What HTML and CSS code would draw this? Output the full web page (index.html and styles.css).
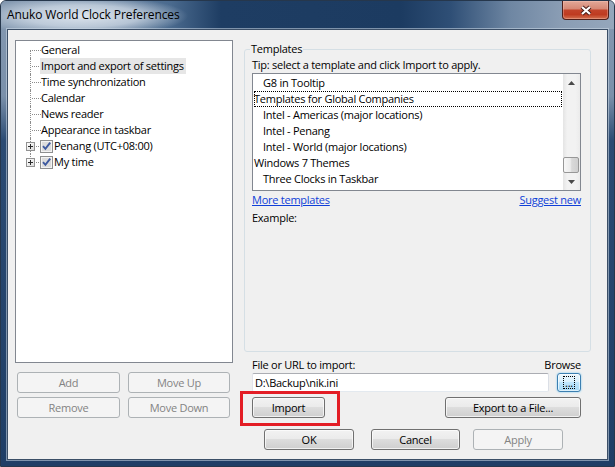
FILE: index.html
```html
<!DOCTYPE html>
<html>
<head>
<meta charset="utf-8">
<link rel="stylesheet" href="styles.css">
</head>
<body>
<div class="window">
  <div class="titlebar">
    <span class="title">Anuko World Clock Preferences</span>
    <div class="close">
      <svg width="14" height="11" viewBox="0 0 14 11"><path d="M3 2 L11 9 M11 2 L3 9" stroke="#4a1d18" stroke-width="4.2" fill="none"/><path d="M3 2 L11 9 M11 2 L3 9" stroke="#ffffff" stroke-width="2.2" fill="none"/></svg>
    </div>
  </div>
  <div class="client">
    <div class="left">
      <div class="tree">
        <div class="row"><span class="conn first"></span><span class="label">General</span></div>
        <div class="row"><span class="conn"></span><span class="label sel">Import and export of settings</span></div>
        <div class="row"><span class="conn"></span><span class="label">Time synchronization</span></div>
        <div class="row"><span class="conn"></span><span class="label">Calendar</span></div>
        <div class="row"><span class="conn"></span><span class="label">News reader</span></div>
        <div class="row"><span class="conn"></span><span class="label">Appearance in taskbar</span></div>
        <div class="row"><span class="conn"><span class="plus"></span></span><span class="check"><svg width="13" height="13" viewBox="0 0 13 13"><rect x="0.5" y="0.5" width="12" height="12" fill="#f3f3f3" stroke="#8e8f8f"/><rect x="2" y="2" width="9" height="9" fill="#dcdcdc"/><path d="M3 6.2 L5.4 8.8 L10.2 2.6" stroke="#3e5aa0" stroke-width="1.9" fill="none"/></svg></span><span class="label">Penang (UTC+08:00)</span></div>
        <div class="row"><span class="conn last"><span class="plus"></span></span><span class="check"><svg width="13" height="13" viewBox="0 0 13 13"><rect x="0.5" y="0.5" width="12" height="12" fill="#f3f3f3" stroke="#8e8f8f"/><rect x="2" y="2" width="9" height="9" fill="#dcdcdc"/><path d="M3 6.2 L5.4 8.8 L10.2 2.6" stroke="#3e5aa0" stroke-width="1.9" fill="none"/></svg></span><span class="label">My time</span></div>
      </div>
      <div class="btn-grid">
        <button class="btn" disabled>Add</button>
        <button class="btn" disabled>Move Up</button>
        <button class="btn" disabled>Remove</button>
        <button class="btn" disabled>Move Down</button>
      </div>
    </div>
    <div class="right">
      <fieldset class="group">
        <legend>Templates</legend>
        <div class="tip">Tip: select a template and click Import to apply.</div>
        <div class="listbox">
          <div class="items">
            <div class="item sub">G8 in Tooltip</div>
            <div class="item focus">Templates for Global Companies</div>
            <div class="item sub">Intel - Americas (major locations)</div>
            <div class="item sub">Intel - Penang</div>
            <div class="item sub">Intel - World (major locations)</div>
            <div class="item">Windows 7 Themes</div>
            <div class="item sub">Three Clocks in Taskbar</div>
          </div>
          <div class="vscroll">
            <div class="sb-btn"><svg width="7" height="4" viewBox="0 0 7 4"><path d="M3.5 0 L7 4 H0 Z" fill="#4a4a4a"/></svg></div>
            <div class="sb-track"><div class="thumb"></div></div>
            <div class="sb-btn"><svg width="7" height="4" viewBox="0 0 7 4"><path d="M0 0 H7 L3.5 4 Z" fill="#4a4a4a"/></svg></div>
          </div>
        </div>
        <div class="links"><a href="#">More templates</a><a href="#">Suggest new</a></div>
        <div class="example">Example:</div>
      </fieldset>
      <div class="import-area">
        <div class="file-labels"><span>File or URL to import:</span><span>Browse</span></div>
        <div class="file-row">
          <div class="input">D:\Backup\nik.ini</div>
          <button class="btn dots"><span class="focus-text">...</span></button>
        </div>
        <div class="action-row">
          <span class="highlight"><button class="btn import">Import</button></span>
          <button class="btn export">Export to a File...</button>
        </div>
      </div>
      <div class="dialog-row">
        <button class="btn ok">OK</button>
        <button class="btn cancel">Cancel</button>
        <button class="btn apply" disabled>Apply</button>
      </div>
    </div>
  </div>
</div>
</body>
</html>
```
FILE: styles.css
```css
* { box-sizing: border-box; }
html, body { margin: 0; padding: 0; background: #ffffff; }
body {
  font-family: "Open Sans", "Noto Sans", sans-serif;
  font-size: 11px;
  line-height: 16px;
  letter-spacing: -0.25px;
  color: #000;
}
.window {
  width: 615px;
  height: 467px;
  display: flex;
  flex-direction: column;
  border: 1px solid #26374c;
  border-radius: 6px 6px 0 0;
  overflow: hidden;
  background: linear-gradient(180deg, #8599b1 0, #7a90aa 95px, #2b4b73 140px, #1f3e66 100%);
}
.titlebar {
  height: 28px;
  flex: none;
  display: flex;
  justify-content: space-between;
  align-items: flex-start;
  background:
    radial-gradient(ellipse 105px 20px at 82px 15px, rgba(226,233,241,0.95) 0%, rgba(212,222,233,0.75) 55%, rgba(200,212,226,0) 100%),
    linear-gradient(90deg, #8398b0 0px, #8398b0 20px, #4a6a8e 170px, #1e3d63 220px, #1c3b61 400px, #2f4f76 450px, #6f87a3 510px, #8a9db4 560px, #95a7bc 615px);
}
.title {
  align-self: center;
  margin-left: 6px;
  font-size: 12px;
  letter-spacing: -0.1px;
  color: #000;
}
.close {
  width: 47px;
  height: 19px;
  margin-right: 5px;
  display: flex;
  align-items: center;
  justify-content: center;
  border: 1px solid #4f1f1a;
  border-top: none;
  border-radius: 0 0 4px 4px;
  background: linear-gradient(180deg, #e2a898 0%, #d68976 42%, #c2432a 52%, #bf3b21 75%, #d2704f 100%);
  box-shadow: inset 0 0 0 1px rgba(255, 205, 195, 0.35);
}
.client {
  flex: 1;
  margin: 0 6px 6px 6px;
  border: 1px solid #3b4e66;
  background: #f0f0f0;
  display: flex;
  gap: 11px;
  padding: 10px 16px 0 7px;
  box-shadow: 0 0 0 1px rgba(205, 218, 232, 0.55);
}
.left {
  width: 218px;
  flex: none;
  display: flex;
  flex-direction: column;
}
.tree {
  height: 323px;
  border: 1px solid #828790;
  background: #fff;
  padding: 1px 0 0 14px;
}
.row {
  height: 16px;
  display: flex;
  align-items: center;
}
.conn {
  flex: none;
  width: 11px;
  height: 16px;
  align-self: flex-start;
  border-left: 1px dotted #8c8c8c;
  background-image: repeating-linear-gradient(90deg, #8c8c8c 0 1px, transparent 1px 2px);
  background-repeat: no-repeat;
  background-size: 10px 1px;
  background-position: 1px 8px;
  display: flex;
  align-items: flex-start;
}
.conn.first {
  height: 8px;
  align-self: flex-end;
  background-position: 1px 0;
}
.conn.last {
  height: 9px;
  background-position: 1px 8px;
}
.plus {
  flex: none;
  width: 9px;
  height: 9px;
  margin-left: -5px;
  margin-top: 4px;
  border: 1px solid #929292;
  background:
    linear-gradient(#2a2a2a, #2a2a2a) center / 5px 1px no-repeat,
    linear-gradient(#2a2a2a, #2a2a2a) center / 1px 5px no-repeat,
    linear-gradient(135deg, #ffffff, #dcdcdc);
}
.check {
  flex: none;
  width: 13px;
  height: 13px;
  margin-left: -1px;
  display: flex;
}
.label {
  white-space: nowrap;
  padding-right: 2px;
  height: 16px;
}
.check + .label { padding-left: 1px; }
.label.sel {
  background: #e6e6e6;
  margin-left: -1px;
  padding-left: 1px;
}
.btn-grid {
  margin-top: 9px;
  padding-left: 2px;
  display: grid;
  grid-template-columns: 103px 102px;
  column-gap: 8px;
  row-gap: 4px;
}
.btn {
  font: inherit;
  letter-spacing: inherit;
  height: 21px;
  padding: 0;
  color: #000;
  border: 1px solid #707070;
  border-radius: 3px;
  background: linear-gradient(180deg, #f2f2f2 0%, #ebebeb 45%, #dddddd 50%, #cfcfcf 100%);
  box-shadow: inset 0 0 0 1px rgba(252, 252, 252, 0.75);
}
.btn:disabled {
  color: #838383;
  border-color: #adb2b5;
  background: #f4f4f4;
  box-shadow: none;
}
.right {
  width: 347px;
  flex: none;
  display: flex;
  flex-direction: column;
}
.group {
  margin: 1px 0 0 0;
  padding: 0 9px 0 7px;
  height: 311px;
  min-width: 0;
  border: 1px solid #d5dfe5;
  border-radius: 3px;
}
.group legend {
  padding: 0 1px;
  margin-left: -2px;
  line-height: 16px;
}
.tip { height: 16px; white-space: nowrap; }
.listbox {
  display: flex;
  height: 118px;
  border: 1px solid #828790;
  background: #fff;
}
.items {
  flex: 1;
  padding-top: 1px;
}
.item {
  height: 16px;
  margin: 0 1px;
  white-space: nowrap;
}
.item.sub { padding-left: 9px; }
.item.focus {
  outline: 1px dotted #000;
  outline-offset: -1px;
}
.vscroll {
  width: 17px;
  flex: none;
  display: flex;
  flex-direction: column;
  background: linear-gradient(90deg, #e4e4e4 0, #f2f2f2 25%, #f2f2f2 75%, #ebebeb 100%);
}
.sb-btn {
  height: 17px;
  flex: none;
  display: flex;
  align-items: center;
  justify-content: center;
}
.sb-track {
  flex: 1;
  display: flex;
  flex-direction: column;
  justify-content: flex-end;
}
.thumb {
  height: 16px;
  width: 16px;
  border: 1px solid #979797;
  border-radius: 2px;
  background: linear-gradient(90deg, #f7f7f7 0%, #ececec 45%, #d9d9d9 55%, #cfcfcf 100%);
}
.links {
  margin-top: 1px;
  display: flex;
  justify-content: space-between;
}
.links a {
  color: #0f3fd8;
  text-decoration: underline;
}
.example { margin-top: 2px; }
.import-area { padding: 0 10px 0 8px; }
.file-labels {
  margin-top: 5px;
  display: flex;
  justify-content: space-between;
}
.file-row {
  display: flex;
  justify-content: space-between;
  align-items: flex-start;
}
.input {
  width: 297px;
  height: 19px;
  line-height: 17px;
  padding-left: 2px;
  background: #fff;
  border: 1px solid;
  border-color: #abadb3 #dbdfe6 #e3e9ef #e2e3ea;
  border-radius: 2px;
  white-space: nowrap;
}
.btn.dots {
  width: 24px;
  height: 19px;
  border-color: #3c7fb1;
  background: linear-gradient(180deg, #eaf6fd 0%, #d9f0fc 45%, #bee6fd 50%, #a7d9f5 100%);
  box-shadow: inset 0 0 0 1px rgba(255, 255, 255, 0.6), 0 0 2px #6cc4f4;
  display: flex;
  align-items: center;
  justify-content: center;
  line-height: 11px;
}
.focus-text {
  outline: 1px dotted #000;
  padding: 0 1px;
}
.action-row {
  margin-top: 5px;
  display: flex;
  justify-content: space-between;
}
.highlight {
  position: relative;
  display: flex;
}
.highlight::after {
  content: "";
  position: absolute;
  left: -12px;
  top: -6px;
  right: -15px;
  bottom: -8px;
  border: 3px solid #e31d25;
}
.btn.import { width: 73px; }
.btn.export { width: 136px; }
.dialog-row {
  margin-top: 11px;
  padding-left: 20px;
  display: flex;
}
.btn.ok { width: 90px; }
.btn.cancel { width: 89px; margin-left: 17px; }
.btn.apply { width: 90px; margin-left: 13px; }
```
